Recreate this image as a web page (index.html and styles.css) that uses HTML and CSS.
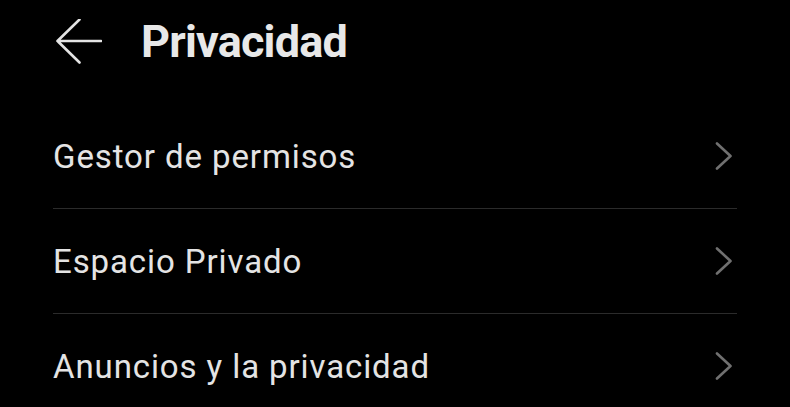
FILE: index.html
```html
<!DOCTYPE html>
<html lang="es">
<head>
<meta charset="utf-8">
<title>Privacidad</title>
<link rel="stylesheet" href="styles.css">
</head>
<body>
<div class="screen">
  <header class="header">
    <svg class="back" width="46" height="46" viewBox="0 0 46 46" aria-hidden="true">
      <path d="M1.5 22 H45 M23.5 0.5 L1.5 22 L23.5 43.5" fill="none" stroke="#e4e4e4" stroke-width="2.6" stroke-linecap="round" stroke-linejoin="round"/>
    </svg>
    <h1 class="title">Privacidad</h1>
  </header>
  <ul class="list">
    <li class="row">
      <span class="label">Gestor de permisos</span>
      <svg class="chev" width="18" height="28" viewBox="0 0 18 28" aria-hidden="true"><path d="M2 1.5 L15.5 14 L2 26.5" fill="none" stroke="#707070" stroke-width="2.6" stroke-linecap="round" stroke-linejoin="round"/></svg>
    </li>
    <li class="row">
      <span class="label">Espacio Privado</span>
      <svg class="chev" width="18" height="28" viewBox="0 0 18 28" aria-hidden="true"><path d="M2 1.5 L15.5 14 L2 26.5" fill="none" stroke="#707070" stroke-width="2.6" stroke-linecap="round" stroke-linejoin="round"/></svg>
    </li>
    <li class="row">
      <span class="label">Anuncios y la privacidad</span>
      <svg class="chev" width="18" height="28" viewBox="0 0 18 28" aria-hidden="true"><path d="M2 1.5 L15.5 14 L2 26.5" fill="none" stroke="#707070" stroke-width="2.6" stroke-linecap="round" stroke-linejoin="round"/></svg>
    </li>
  </ul>
</div>
</body>
</html>
```

FILE: styles.css
```css
html, body {
  margin: 0;
  padding: 0;
  background: #000;
}
body {
  width: 790px;
  height: 407px;
  overflow: hidden;
  font-family: Roboto, "Noto Sans", sans-serif;
  color: #e6e6e6;
}
.screen {
  display: flex;
  flex-direction: column;
}
.header {
  display: flex;
  align-items: center;
  height: 83px;
  padding-left: 56px;
}
.back {
  display: block;
  flex: none;
}
.title {
  margin: 0 0 0 39px;
  font-size: 45px;
  font-weight: 700;
  letter-spacing: -0.8px;
  color: #e8e8e8;
  line-height: 1;
}
.list {
  list-style: none;
  margin: 21px 0 0 53px;
  padding: 0;
  width: 684px;
}
.row {
  display: flex;
  align-items: center;
  justify-content: space-between;
  height: 104px;
  border-bottom: 1px solid #2b2b2b;
}
.label {
  font-size: 33px;
  letter-spacing: 0.9px;
  color: #e4e4e4;
  padding-left: 0;
}
.chev {
  display: block;
  margin-right: 4px;
}
```
